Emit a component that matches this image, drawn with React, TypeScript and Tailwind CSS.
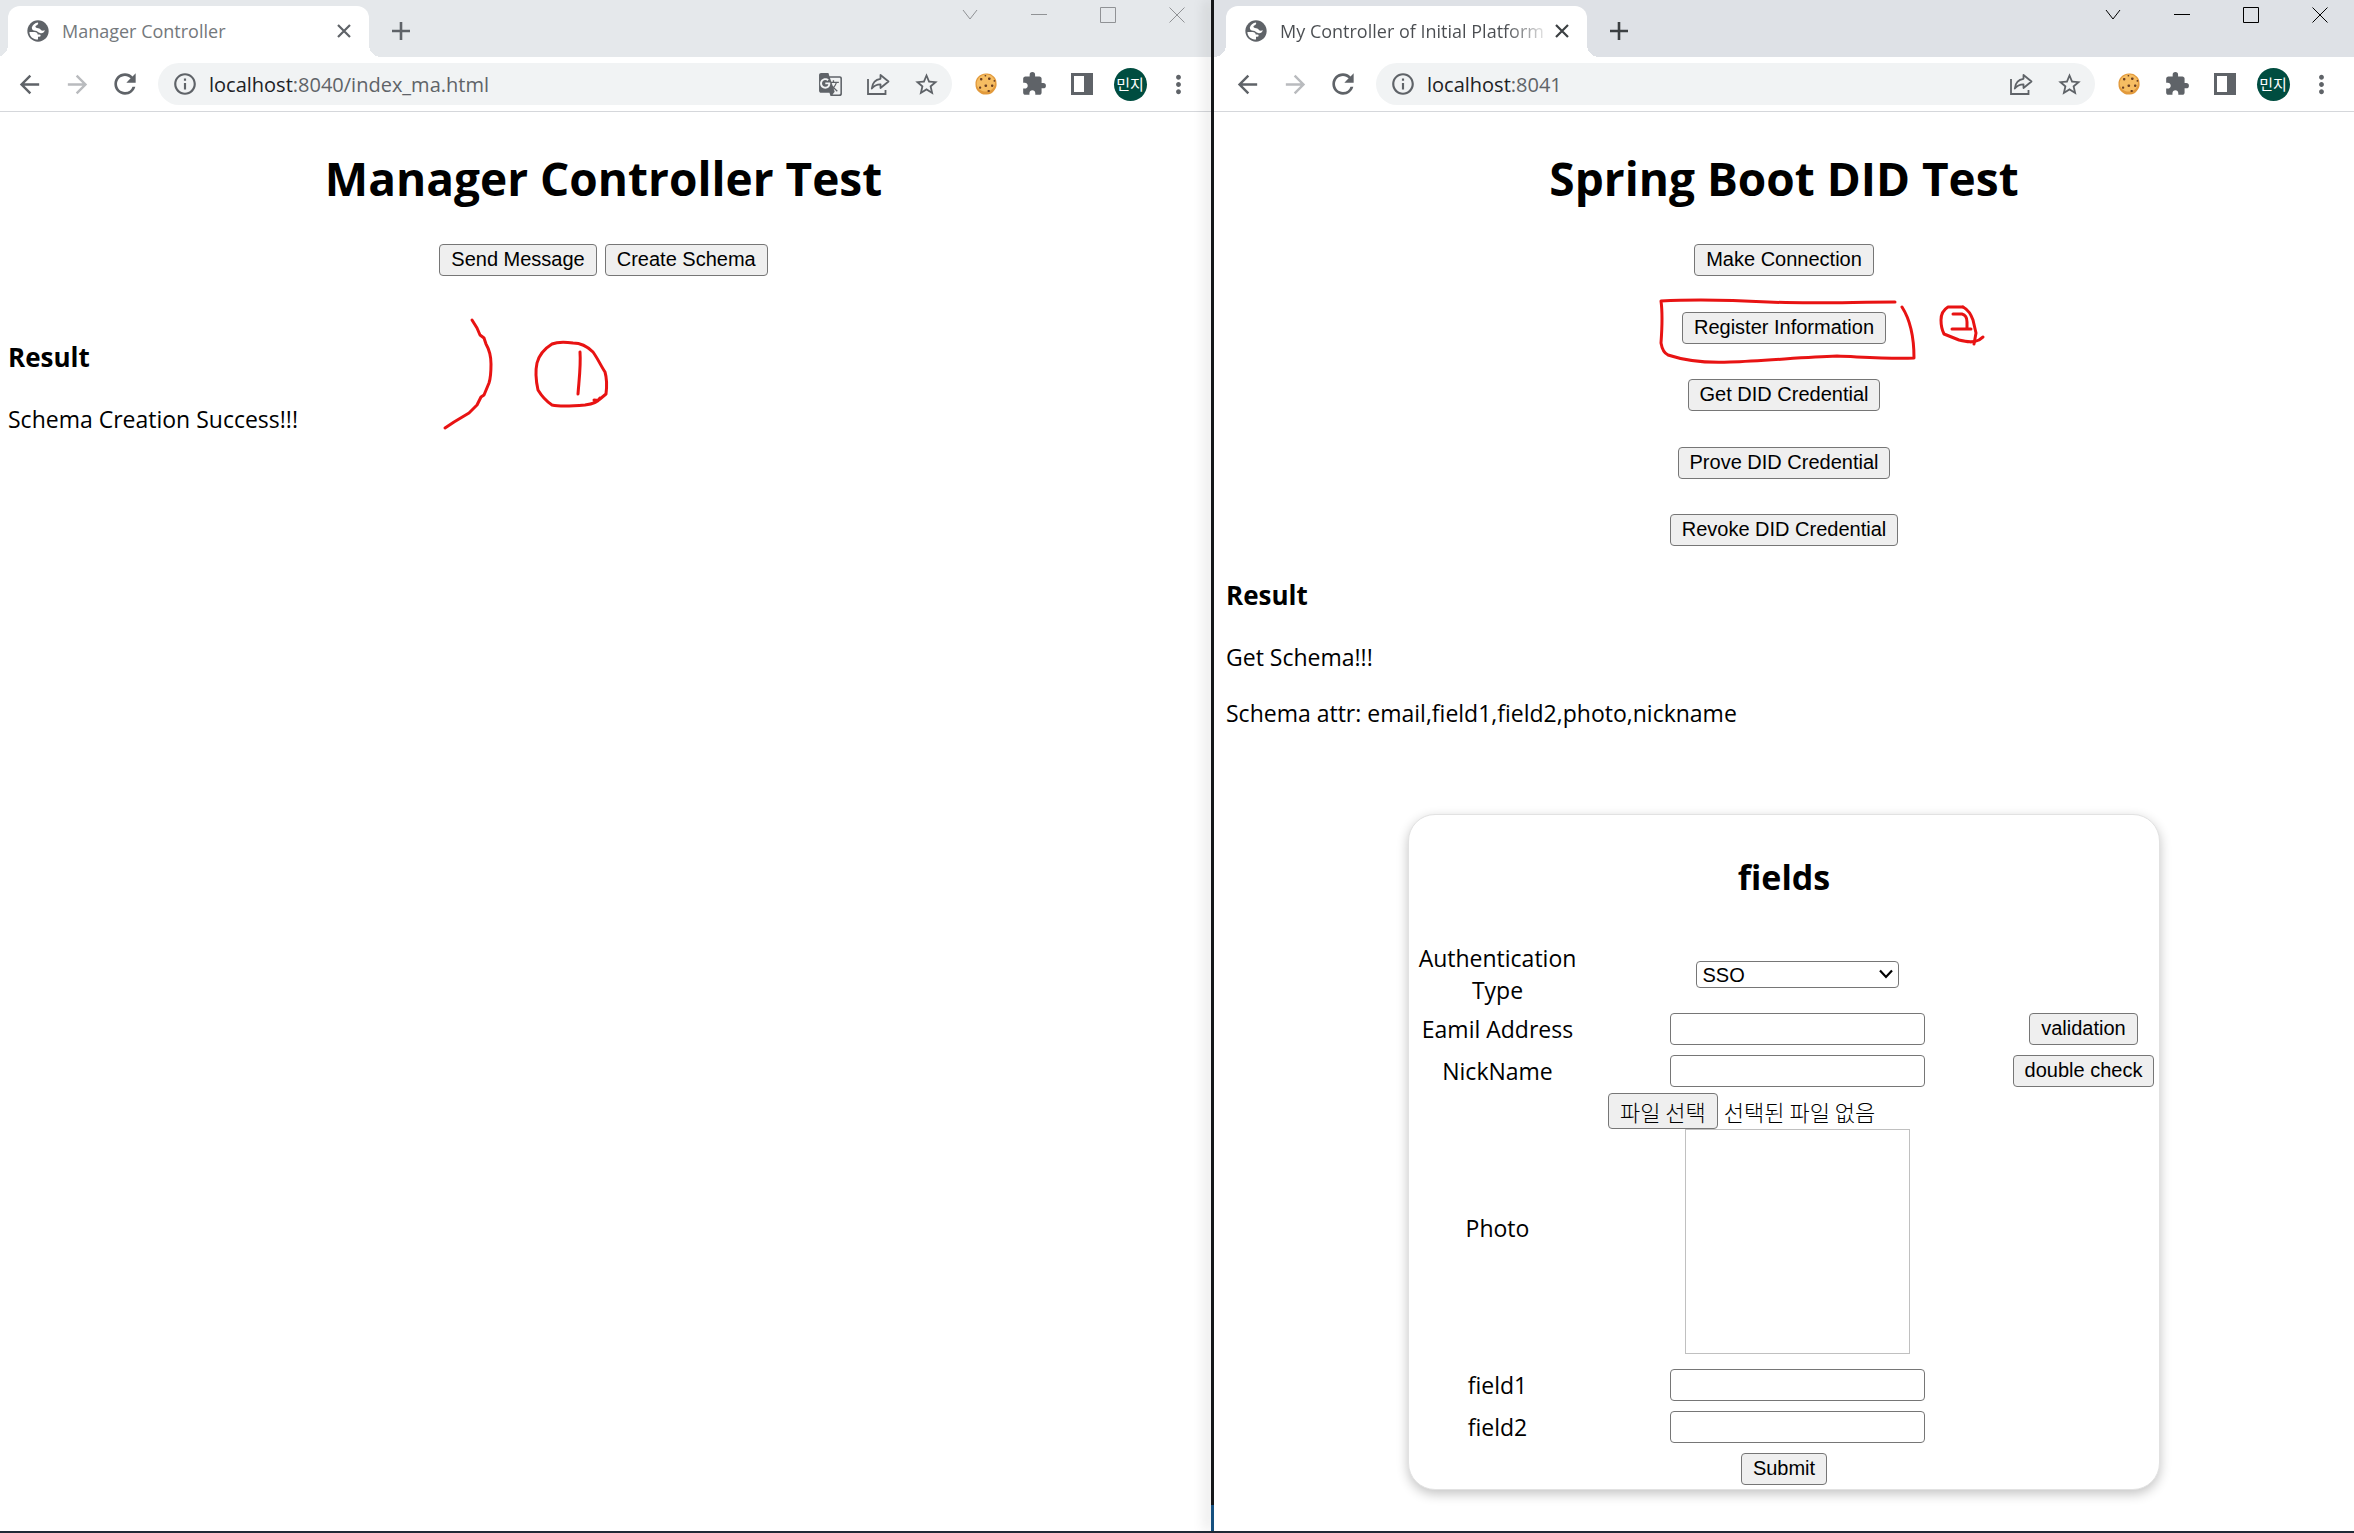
import type { ButtonHTMLAttributes, InputHTMLAttributes, ReactNode } from "react";
import {
  MdArrowBack,
  MdArrowForward,
  MdExtension,
  MdGTranslate,
  MdInfoOutline,
  MdMoreVert,
  MdRefresh,
  MdStarBorder,
} from "react-icons/md";

function GlobeIcon() {
  return (
    <svg viewBox="0 0 64 64" className="size-[22px] shrink-0" aria-hidden="true">
      <circle cx="32" cy="32" r="31" fill="#5f6368" />
      <g fill="#fff">
        <path d="M7 35h15c6 0 9 3 9 7h5c5 0 5 6 0 7h-4v8C17 57 7 48 7 35z" />
        <path d="M32 7c2 4-1 7-5 9s-3 6 2 7 9 1 11 5c2 3 6 4 12 2-2 7-8 10-14 8s-8-7-14-7S14 29 14 22c2-8 9-14 18-15z" />
      </g>
    </svg>
  );
}

function ShareIcon() {
  return (
    <svg viewBox="0 0 24 24" className="size-6" fill="none" stroke="#5f6368" strokeWidth="1.8" aria-hidden="true">
      <path d="M2 7v15h17.500v-4" />
      <path d="M14.500 3l8 6.500-8 6.500v-3.700c-4.500 0-6.500 1.200-8.700 4.200.5-5.500 3.500-9 8.700-9.700z" strokeLinejoin="round" />
    </svg>
  );
}

function CookieIcon() {
  return (
    <svg viewBox="0 0 24 24" className="size-6" aria-hidden="true">
      <path
        d="M12 1.500c3-.3 5 .5 6.800 2.300 2.300 1.600 3.700 4 3.700 7 .5 3-.4 5.700-2.300 7.700-1.700 2.600-4.200 4-7.300 4-3.300.4-6-.5-8-2.500C2.600 18.300 1.400 15.600 1.500 12.500c-.3-3 .7-5.500 2.500-7.500 2-2.300 4.700-3.500 8-3.500z"
        fill="#e29a3c"
      />
      <path
        d="M11.500 2.500c5-.5 9.200 3 9.500 7.800.2 5-3.500 9-8.500 9.300C7 19.900 3 16.500 2.800 12 2.500 7 6.500 3 11.500 2.500z"
        fill="#f6bd62"
      />
      <g fill="#6b3f23">
        <rect x="6" y="6" width="2.400" height="2.400" rx=".8" />
        <rect x="14" y="5.500" width="2.600" height="2.400" rx=".8" />
        <rect x="10.500" y="12.500" width="2.600" height="2.400" rx=".8" />
        <rect x="5" y="14.500" width="2.200" height="2.200" rx=".8" />
        <rect x="17" y="12.500" width="2.400" height="2.400" rx=".8" />
        <rect x="13.500" y="18" width="2.400" height="2" rx=".8" />
        <rect x="10.500" y="3" width="1.800" height="1.500" rx=".7" />
        <rect x="19.500" y="8" width="1.800" height="1.800" rx=".7" />
      </g>
    </svg>
  );
}

function SidePanelIcon() {
  return (
    <svg viewBox="0 0 22 22" className="size-[22px]" aria-hidden="true">
      <path fillRule="evenodd" d="M0 0h22v22H0zM3 3v16h10V3z" fill="#5f6368" />
    </svg>
  );
}

function BarButton({ label, children }: { label: string; children: ReactNode }) {
  return (
    <button type="button" aria-label={label} className="flex h-10 w-12 shrink-0 items-center justify-center text-[#5f6368]">
      {children}
    </button>
  );
}

const captionGlyphs = [
  { label: "Search tabs", d: "M1 3l7 9 7-9" },
  { label: "Minimize", d: "M0 7.500h16" },
  { label: "Maximize", d: "M.5.5h15v15H.5z" },
  { label: "Close", d: "M.5.5l15 15M15.500.5l-15 15" },
];

type BrowserProps = {
  title: string;
  host: string;
  path: string;
  active?: boolean;
  children: ReactNode;
};

function Browser({ title, host, path, active = false, children }: BrowserProps) {
  const inset = active ? "pl-1" : "pl-0";
  return (
    <section className="flex min-w-0 flex-col bg-white">
      <div className={`flex h-[57px] ${inset} ${active ? "bg-[#dee1e6]" : "bg-[#e5e8eb]"}`}>
        <div className="relative mt-1.5 ml-2 flex h-[51px] w-[361px] items-center rounded-t-xl bg-white pr-3 pb-0.5 pl-[19px]">
          <span className="absolute bottom-0 -left-3 size-3 bg-[radial-gradient(circle_at_0_0,transparent_12px,white_12px)]" />
          <span className="absolute -right-3 bottom-0 size-3 bg-[radial-gradient(circle_at_100%_0,transparent_12px,white_12px)]" />
          <GlobeIcon />
          <span
            className={`ml-[13px] whitespace-nowrap text-[18px] ${
              active
                ? "bg-linear-to-r from-[#4a4d51] from-85% to-[#e4e4e4] bg-clip-text text-transparent"
                : "text-[#74787c]"
            }`}
          >
            {title}
          </span>
          <button type="button" aria-label="Close tab" className={`ml-auto p-1.5 ${active ? "text-[#3c4043]" : "text-[#5f6368]"}`}>
            <svg viewBox="0 0 14 14" className="size-3.5" stroke="currentColor" strokeWidth="2.200" aria-hidden="true">
              <path d="M1 1l12 12M13 1L1 13" />
            </svg>
          </button>
        </div>
        <button
          type="button"
          aria-label="New tab"
          className={`mt-1 ml-3 flex size-10 self-center items-center justify-center ${active ? "text-[#3c4043]" : "text-[#5f6368]"}`}
        >
          <svg viewBox="0 0 18 18" className="size-[18px]" stroke="currentColor" strokeWidth="2.600" aria-hidden="true">
            <path d="M9 0v18M0 9h18" />
          </svg>
        </button>
        <div className={`ml-auto flex h-[30px] ${active ? "text-black" : "text-[#909295]"}`}>
          {captionGlyphs.map((glyph) => (
            <button key={glyph.label} type="button" aria-label={glyph.label} className="flex w-[69px] items-center justify-center">
              <svg viewBox="0 0 16 16" className="size-4" fill="none" stroke="currentColor" aria-hidden="true">
                <path d={glyph.d} />
              </svg>
            </button>
          ))}
        </div>
      </div>

      <div className={`flex h-[55px] items-center border-b border-[#d5d7db] ${inset} pr-[9px]`}>
        <div className="flex pl-[5px]">
          <BarButton label="Back">
            <MdArrowBack className="size-[29px]" />
          </BarButton>
          <BarButton label="Forward">
            <MdArrowForward className="size-[29px] text-[#b9bbbe]" />
          </BarButton>
          <BarButton label="Reload">
            <MdRefresh className="size-8" />
          </BarButton>
        </div>
        <div className="mr-2.5 ml-[9px] flex h-[42px] min-w-0 grow items-center rounded-full bg-[#f1f3f4] pr-0.5 pl-[14px] text-[20px]">
          <MdInfoOutline className="size-[26px] shrink-0 text-[#5f6368]" />
          <p className="ml-[11px] grow truncate pt-0.5 text-[#5f6368]">
            <span className="text-[#202124]">{host}</span>
            {path}
          </p>
          {!active && (
            <BarButton label="Translate this page">
              <MdGTranslate className="size-[25px]" />
            </BarButton>
          )}
          <BarButton label="Share">
            <ShareIcon />
          </BarButton>
          <BarButton label="Bookmark">
            <MdStarBorder className="size-[27px]" />
          </BarButton>
        </div>
        <BarButton label="Cookie extension">
          <CookieIcon />
        </BarButton>
        <BarButton label="Extensions">
          <MdExtension className="size-[26px]" />
        </BarButton>
        <BarButton label="Side panel">
          <SidePanelIcon />
        </BarButton>
        <BarButton label="Profile">
          <span className="flex size-[33px] items-center justify-center rounded-full bg-[#004d40] font-['Noto_Sans_CJK_KR',sans-serif] text-[15px] text-white">
            민지
          </span>
        </BarButton>
        <BarButton label="Menu">
          <MdMoreVert className="size-[29px]" />
        </BarButton>
      </div>
      {children}
    </section>
  );
}

function PushButton(props: ButtonHTMLAttributes<HTMLButtonElement>) {
  return (
    <button
      type="button"
      className="h-8 rounded-[4px] border border-[#767676] bg-[#efefef] px-[11px] pb-0.5 font-['Liberation_Sans',sans-serif] text-[20px] leading-[28px] whitespace-nowrap"
      {...props}
    />
  );
}

function TextField(props: InputHTMLAttributes<HTMLInputElement>) {
  return (
    <input
      type="text"
      className="mx-auto block h-8 w-[255px] rounded-[4px] border border-[#767676] bg-white px-1 font-['Liberation_Sans',sans-serif] text-[20px]"
      {...props}
    />
  );
}

function FieldsForm() {
  return (
    <form className="mx-auto mt-[85px] w-[752px] rounded-[27px] border border-[#e2e2e2] bg-white shadow-[0_4px_12px_rgba(0,0,0,0.24)]">
      <h2 className="mt-[38px] text-center text-[34px] leading-[48px] font-bold">fields</h2>
      <table className="mt-10 w-full table-fixed border-collapse text-center">
        <colgroup>
          <col className="w-[177px]" />
          <col />
          <col className="w-[151px]" />
        </colgroup>
        <tbody>
          <tr className="h-[67px]">
            <th scope="row" className="px-2 pb-0.5 font-normal">
              <label htmlFor="auth">Authentication Type</label>
            </th>
            <td>
              <div className="relative mx-auto w-[203px]">
                <select
                  id="auth"
                  className="block h-[27px] w-full appearance-none rounded-[4px] border border-[#767676] bg-white pl-1.5 font-['Liberation_Sans',sans-serif] text-[20px] leading-[24px]"
                >
                  <option>SSO</option>
                </select>
                <svg
                  viewBox="0 0 14 10"
                  className="pointer-events-none absolute top-2 right-1.5 h-2.5 w-3.5"
                  fill="none"
                  stroke="#000"
                  strokeWidth="2.200"
                  aria-hidden="true"
                >
                  <path d="M1 1.500l6 6.500 6-6.500" />
                </svg>
              </div>
            </td>
            <td />
          </tr>
          <tr className="h-[42px]">
            <th scope="row" className="font-normal">
              <label htmlFor="email">Eamil Address</label>
            </th>
            <td>
              <TextField id="email" />
            </td>
            <td className="leading-none">
              <PushButton>validation</PushButton>
            </td>
          </tr>
          <tr className="h-[42px]">
            <th scope="row" className="font-normal">
              <label htmlFor="nickname">NickName</label>
            </th>
            <td>
              <TextField id="nickname" />
            </td>
            <td className="leading-none">
              <PushButton>double check</PushButton>
            </td>
          </tr>
          <tr className="h-[272px]">
            <th scope="row" className="font-normal">
              <label htmlFor="photo">Photo</label>
            </th>
            <td className="pt-px align-top">
              <div className="flex pl-[22px] font-['Noto_Sans_CJK_KR',sans-serif] text-[22px] font-light">
                <input id="photo" type="file" className="sr-only" />
                <label
                  htmlFor="photo"
                  className="flex h-9 items-center rounded-[4px] border border-[#767676] bg-[#efefef] px-[11px]"
                >
                  파일 선택
                </label>
                <span className="ml-1.5 self-center">선택된 파일 없음</span>
              </div>
              <div className="mx-auto size-[225px] border border-[#c0c0c0]" />
            </td>
            <td />
          </tr>
          <tr className="h-[42px]">
            <th scope="row" className="font-normal">
              <label htmlFor="field1">field1</label>
            </th>
            <td>
              <TextField id="field1" />
            </td>
            <td />
          </tr>
          <tr className="h-[42px]">
            <th scope="row" className="font-normal">
              <label htmlFor="field2">field2</label>
            </th>
            <td>
              <TextField id="field2" />
            </td>
            <td />
          </tr>
          <tr className="h-[41px]">
            <td colSpan={3} className="leading-none">
              <PushButton type="submit">Submit</PushButton>
            </td>
          </tr>
        </tbody>
      </table>
    </form>
  );
}

const actions = ["Make Connection", "Register Information", "Get DID Credential", "Prove DID Credential", "Revoke DID Credential"];

export default function App() {
  return (
    <div className="flex min-h-screen flex-col border-b-2 border-[#1f2a36] bg-white font-['Open_Sans','Noto_Sans_CJK_KR',sans-serif] text-[23px] leading-[32px] text-black">
      <div className="grid grow grid-cols-[1211fr_3px_1140fr]">
        <Browser title="Manager Controller" host="localhost" path=":8040/index_ma.html">
          <main className="relative px-2 pr-3">
            <h1 className="mt-[34px] text-center text-[46px] leading-[64px] font-bold">Manager Controller Test</h1>
            <div className="mt-[34px] flex justify-center gap-2">
              <PushButton>Send Message</PushButton>
              <PushButton>Create Schema</PushButton>
            </div>
            <h3 className="mt-[63px] text-[26px] leading-[36px] font-bold">Result</h3>
            <p className="mt-7">Schema Creation Success!!!</p>
            <svg
              viewBox="436 310 180 126"
              className="pointer-events-none absolute top-[198px] left-1/2 -ml-[170px] h-[126px] w-[180px]"
              fill="none"
              stroke="#e81313"
              strokeWidth="3"
              strokeLinecap="round"
              strokeLinejoin="round"
              aria-hidden="true"
            >
              <path d="M472 320l5 8 3 7 4 3 2 6c4 7 5 12 5 20 0 7 0 13-2 19l-5 12-3 2-4 8-8 8-5 3-10 6-9 6" />
              <path d="M580 352c1 14-1 28-2 42" />
              <path d="M594 400c3 0 5 1 6-1l6-5c1-8 1-15-1-22-4-6-7-13-12-20-6-6-12-9-20-9-8-1-16-1-21 1-8 5-13 11-15 19-2 9-1 18 1 27 3 5 8 11 14 15 9 2 21 1 33 0 8-1 13-3 15-7" />
            </svg>
          </main>
        </Browser>

        <div className="z-10 flex flex-col bg-[#151719] shadow-[-3px_0_14px_rgba(0,0,0,0.3)]">
          <span className="mt-auto h-[26px] bg-[#15507f]" />
        </div>

        <div className="z-20 flex flex-col *:grow">
          <Browser title="My Controller of Initial Platform" host="localhost" path=":8041" active>
            <main className="relative px-3">
              <h1 className="mt-[34px] text-center text-[46px] leading-[64px] font-bold">Spring Boot DID Test</h1>
              <div className="mt-[34px] flex h-[302px] flex-col items-center justify-between">
                {actions.map((action) => (
                  <PushButton key={action}>{action}</PushButton>
                ))}
              </div>
              <h3 className="mt-[31px] text-[26px] leading-[36px] font-bold">Result</h3>
              <p className="mt-7">Get Schema!!!</p>
              <p className="mt-6">Schema attr: email,field1,field2,photo,nickname</p>
              <FieldsForm />
              <svg
                viewBox="1651 295 340 72"
                className="pointer-events-none absolute top-[183px] left-1/2 -ml-[133px] h-[72px] w-[340px]"
                fill="none"
                stroke="#e81313"
                strokeWidth="3"
                strokeLinecap="round"
                strokeLinejoin="round"
                aria-hidden="true"
              >
                <path d="M1895 302c-42 0-84 2-127 0-36-2-72-3-107-1 2 14 1 28 0 42 1 6 3 10 7 12 18 6 40 8 62 7 36-1 72-5 107-6 26 1 51 3 77 2 0-18-3-37-12-51" />
                <path d="M1963 307h-15c-5 3-7 8-7 13s1 10 3 14l15 6c8 2 14 3 20 0l4-3" />
                <path d="M1963 307c6 3 8 8 10 13l3 13-2 11" />
                <path d="M1953 314h9c4 1 5 4 5 8v7M1952 329h19" />
              </svg>
            </main>
          </Browser>
        </div>
      </div>
    </div>
  );
}
